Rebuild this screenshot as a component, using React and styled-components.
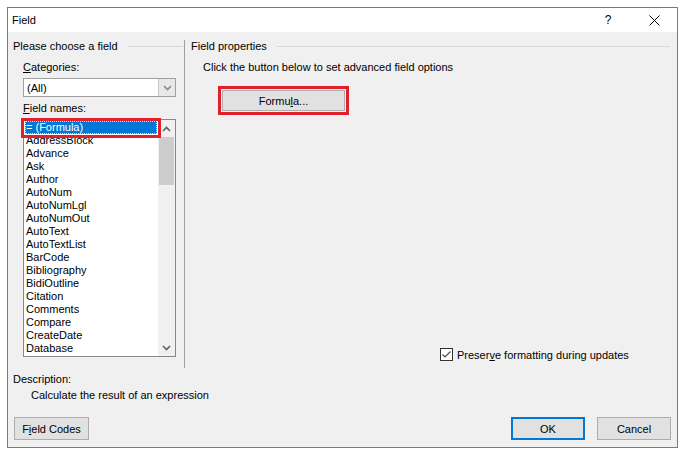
import React from "react";
import styled, { createGlobalStyle } from "styled-components";

const Global = createGlobalStyle`
  html, body { margin: 0; padding: 0; background: #ffffff; }
  body { font-family: "Liberation Sans", Arial, sans-serif; font-size: 11px; color: #000; }
  * { box-sizing: border-box; }
`;

const Window = styled.div`
  margin: 7px 0 0 7px;
  width: 671px;
  height: 441px;
  border: 1px solid #7a7a7a;
  display: flex;
  flex-direction: column;
  background: #f0f0f0;
`;

const TitleBar = styled.div`
  height: 24px;
  background: #ffffff;
  display: flex;
  align-items: center;
  padding-left: 4px;
  font-size: 11px;
  & span { flex: 1; }
`;

const TitleIcon = styled.div`
  width: ${(p) => p.w}px;
  display: flex;
  justify-content: center;
  align-items: center;
  font-size: 12px;
`;

const Body = styled.div`
  flex: 1;
  display: flex;
  flex-direction: column;
  padding: 8px 6px 7px 0;
`;

const Main = styled.div`
  display: flex;
  height: 328px;
`;

const LeftCol = styled.div`
  width: 176px;
  display: flex;
  flex-direction: column;
`;

const RightCol = styled.div`
  flex: 1;
  display: flex;
  flex-direction: column;
  padding-left: 6px;
`;

const Separator = styled.div`
  width: 1px;
  background: #a0a0a0;
`;

const GroupHeader = styled.div`
  display: flex;
  align-items: center;
  height: 13px;
  line-height: 13px;
  padding-left: ${(p) => p.pad || 0}px;
  padding-right: ${(p) => p.right || 0}px;
  gap: 10px;
  white-space: nowrap;
  &::after {
    content: "";
    flex: 1;
    height: 1px;
    background: #d8d8d8;
  }
`;

const Group = styled.div`
  display: flex;
  flex-direction: column;
  padding-left: 15px;
`;

const Label = styled.div`
  height: 13px;
  line-height: 13px;
  margin-top: ${(p) => p.top || 0}px;
  white-space: nowrap;
`;

const Acc = styled.span`
  text-decoration: underline;
  text-underline-offset: 1px;
`;

const Select = styled.div`
  margin-top: 4px;
  width: 153px;
  height: 19px;
  border: 1px solid #a0a0a0;
  background: #fff;
  display: flex;
  align-items: center;
  padding-left: 3px;
  & span { flex: 1; }
`;

const DropButton = styled.div`
  width: 17px;
  height: 17px;
  background: #e8e8e8;
  border-left: 1px solid #c8c8c8;
  display: flex;
  align-items: center;
  justify-content: center;
`;

const ListWrap = styled.div`
  position: relative;
  margin-top: 4px;
  width: 153px;
  height: 238px;
  border: 1px solid #828790;
  background: #fff;
  display: flex;
`;

const Items = styled.div`
  flex: 1;
  padding: 1px 1px 0 1px;
  overflow: hidden;
`;

const Item = styled.div`
  height: 13px;
  line-height: 12px;
  padding-left: 1px;
  white-space: nowrap;
  color: ${(p) => (p.selected ? "#fff" : "#000")};
  background: ${(p) => (p.selected ? "#0078d7" : "transparent")};
  outline: ${(p) => (p.selected ? "1px dotted #cfe4f7" : "none")};
  outline-offset: -1px;
`;

const Scrollbar = styled.div`
  width: 17px;
  background: #f0f0f0;
  display: flex;
  flex-direction: column;
  align-items: center;
`;

const ScrollArrow = styled.div`
  height: 17px;
  width: 17px;
  display: flex;
  align-items: center;
  justify-content: center;
`;

const Thumb = styled.div`
  width: 15px;
  height: 48px;
  background: #cdcdcd;
`;

const Spacer = styled.div`
  flex: 1;
`;

const Highlight = styled.div`
  position: absolute;
  left: ${(p) => p.x}px;
  top: ${(p) => p.y}px;
  width: ${(p) => p.w}px;
  height: ${(p) => p.h}px;
  border: 3px solid #e0202a;
  pointer-events: none;
`;

const Intro = styled.div`
  margin-top: 8px;
  padding-left: 12px;
  height: 13px;
  line-height: 13px;
`;

const FormulaFrame = styled.div`
  margin: 12px 0 0 27px;
  width: 131px;
  height: 29px;
  border: 3px solid #e0202a;
  padding: 1px 0 0 1px;
`;

const Button = styled.div`
  width: ${(p) => p.w}px;
  height: ${(p) => p.h || 23}px;
  background: #e1e1e1;
  border: ${(p) => (p.primary ? "2px solid #0078d7" : "1px solid #adadad")};
  display: flex;
  align-items: center;
  justify-content: center;
  white-space: nowrap;
`;

const CheckRow = styled.div`
  margin-top: auto;
  margin-bottom: 7px;
  padding-left: 249px;
  display: flex;
  align-items: center;
  gap: 4px;
  height: 13px;
`;

const CheckBox = styled.div`
  width: 13px;
  height: 13px;
  border: 1px solid #333;
  background: #fff;
  display: flex;
  align-items: center;
  justify-content: center;
`;

const Description = styled.div`
  margin-top: 5px;
  padding-left: 5px;
  display: flex;
  flex-direction: column;
  gap: 3px;
  & div { height: 13px; line-height: 13px; }
  & div + div { padding-left: 18px; }
`;

const ButtonRow = styled.div`
  margin-top: auto;
  display: flex;
  align-items: center;
  padding-left: 6px;
  gap: 12px;
  & > :first-child { margin-right: auto; }
`;

const Chevron = ({ up, color = "#606060" }) => (
  <svg width="9" height="6" viewBox="0 0 9 6">
    <path
      d={up ? "M1 5 L4.5 1.5 L8 5" : "M1 1 L4.5 4.5 L8 1"}
      fill="none"
      stroke={color}
      strokeWidth="1.6"
    />
  </svg>
);

const names = [
  "AddressBlock", "Advance", "Ask", "Author", "AutoNum", "AutoNumLgl",
  "AutoNumOut", "AutoText", "AutoTextList", "BarCode", "Bibliography",
  "BidiOutline", "Citation", "Comments", "Compare", "CreateDate", "Database",
];

export default function App() {
  return (
    <>
      <Global />
      <Window>
        <TitleBar>
          <span>Field</span>
          <TitleIcon w={46}>?</TitleIcon>
          <TitleIcon w={46}>
            <svg width="11" height="11" viewBox="0 0 11 11">
              <path d="M0.5 0.5 L10.5 10.5 M10.5 0.5 L0.5 10.5" stroke="#000" strokeWidth="1" />
            </svg>
          </TitleIcon>
        </TitleBar>
        <Body>
          <Main>
            <LeftCol>
              <GroupHeader pad={5} right={1}>Please choose a field</GroupHeader>
              <Group>
                <Label top={8}><Acc>C</Acc>ategories:</Label>
                <Select>
                  <span>(All)</span>
                  <DropButton><Chevron color="#8a8a8a" /></DropButton>
                </Select>
                <Label top={5}><Acc>F</Acc>ield names:</Label>
                <ListWrap>
                  <Items>
                    <Item selected>= (Formula)</Item>
                    {names.map((n) => (
                      <Item key={n}>{n}</Item>
                    ))}
                  </Items>
                  <Scrollbar>
                    <ScrollArrow><Chevron up /></ScrollArrow>
                    <Thumb />
                    <Spacer />
                    <ScrollArrow><Chevron /></ScrollArrow>
                  </Scrollbar>
                  <Highlight x={-3} y={-2} w={140} h={20} />
                </ListWrap>
              </Group>
            </LeftCol>
            <Separator />
            <RightCol>
              <GroupHeader right={1}>Field properties</GroupHeader>
              <Intro>Click the button below to set advanced field options</Intro>
              <FormulaFrame>
                <Button w={123} h={21}>Formu<Acc>l</Acc>a...</Button>
              </FormulaFrame>
              <CheckRow>
                <CheckBox>
                  <svg width="11" height="11" viewBox="0 0 11 11">
                    <path d="M1.5 5.5 L4 8 L9.5 2.5" fill="none" stroke="#4a4a4a" strokeWidth="1.2" />
                  </svg>
                </CheckBox>
                <span>Preser<Acc>v</Acc>e formatting during updates</span>
              </CheckRow>
            </RightCol>
          </Main>
          <Description>
            <div>Description:</div>
            <div>Calculate the result of an expression</div>
          </Description>
          <ButtonRow>
            <Button w={75}>F<Acc>i</Acc>eld Codes</Button>
            <Button w={74} primary>OK</Button>
            <Button w={74}>Cancel</Button>
          </ButtonRow>
        </Body>
      </Window>
    </>
  );
}
